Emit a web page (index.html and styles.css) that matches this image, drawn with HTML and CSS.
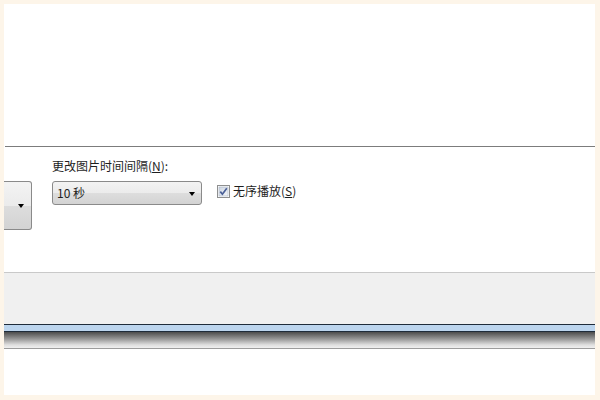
FILE: index.html
```html
<!DOCTYPE html>
<html lang="zh-CN">
<head>
  <meta charset="UTF-8" />
  <title>幻灯片放映设置</title>
  <link rel="stylesheet" href="styles.css">
</head>
<body>

<div class="frame">
  <div class="screen">
    <div class="blank"></div>
    <div class="rule"></div>

    <section class="settings">
      <div class="combo combo-cut">
        <span class="arrow"></span>
      </div>

      <div class="field">
        <label class="field-label">更改图片时间间隔(<u>N</u>):</label>
        <div class="combo combo-time">
          <span class="combo-value">10 秒</span>
          <span class="arrow"></span>
        </div>
      </div>

      <label class="check">
        <svg class="check-box" width="13" height="13" viewBox="0 0 13 13">
          <defs>
            <linearGradient id="boxfill" x1="0" y1="0" x2="1" y2="1">
              <stop offset="0" stop-color="#cdd6e2" />
              <stop offset="1" stop-color="#f4f6f9" />
            </linearGradient>
          </defs>
          <rect x="0.5" y="0.5" width="12" height="12" fill="#fff" stroke="#8e8f8f" />
          <rect x="2" y="2" width="9" height="9" fill="url(#boxfill)" stroke="#a8b3c2" stroke-width="0.6" />
          <path d="M3.3 6.6 L5.4 9.2 L9.8 3.2" fill="none" stroke="#4a5f97" stroke-width="1.7" />
        </svg>
        <span>无序播放(<u>S</u>)</span>
      </label>
    </section>

    <div class="band">
      <div class="band-fill"></div>
      <div class="band-edge"></div>
      <div class="band-blue"></div>
      <div class="band-edge"></div>
      <div class="band-shade"></div>
    </div>
  </div>
</div>

</body>
</html>
```

FILE: styles.css
```css
body {
  margin: 0;
  font-family: "Noto Sans CJK SC", "Liberation Sans", sans-serif;
  font-size: 12px;
  color: #1e1e1e;
}
.frame {
  width: 600px;
  height: 400px;
  box-sizing: border-box;
  padding: 4px 5px 5px 4px;
  background: #fdf5e9;
}
.screen {
  height: 391px;
  background: #fff;
  display: flex;
  flex-direction: column;
}
.blank {
  height: 142px;
}
.rule {
  height: 1px;
  margin-left: 1px;
  background: #7c7c7c;
}
.settings {
  height: 125px;
  display: flex;
  align-items: flex-start;
}
.combo {
  position: relative;
  box-sizing: border-box;
  border: 1px solid #8a8a8a;
  border-radius: 3px;
  background: linear-gradient(#f3f3f3, #ebebeb 50%, #dddddd 51%, #d3d3d3);
}
.combo-cut {
  width: 28px;
  height: 49px;
  margin-top: 34px;
  border-left: none;
  border-radius: 0 3px 3px 0;
}
.combo-cut .arrow {
  right: 7px;
  top: 22px;
}
.field {
  margin-left: 20px;
  padding-top: 11px;
  display: flex;
  flex-direction: column;
}
.field-label {
  line-height: 16px;
  height: 16px;
}
.combo-time {
  width: 150px;
  height: 24px;
  margin-top: 7px;
  display: flex;
  align-items: center;
  padding-left: 4px;
}
.combo-time .arrow {
  right: 6px;
  top: 10px;
}
.combo-value {
  line-height: 16px;
}
.arrow {
  position: absolute;
  width: 0;
  height: 0;
  border-left: 3.5px solid transparent;
  border-right: 3.5px solid transparent;
  border-top: 4px solid #000;
}
.check {
  margin-left: 15px;
  margin-top: 36px;
  display: flex;
  align-items: center;
  gap: 3px;
  line-height: 16px;
}
.check-box {
  display: block;
}
.band {
  border-top: 1px solid #c9c9c9;
  display: flex;
  flex-direction: column;
}
.band-fill {
  height: 51px;
  background: #f0f0f0;
}
.band-edge {
  height: 1px;
  background: #1f2c3a;
}
.band-blue {
  height: 6px;
  background: #bcd5ee;
}
.band-shade {
  height: 16px;
  border-bottom: 1px solid #9c9c9c;
  background: linear-gradient(#4c4c4c, #9a9a9a 45%, #dedede 80%, #f0f0f0);
}
```
